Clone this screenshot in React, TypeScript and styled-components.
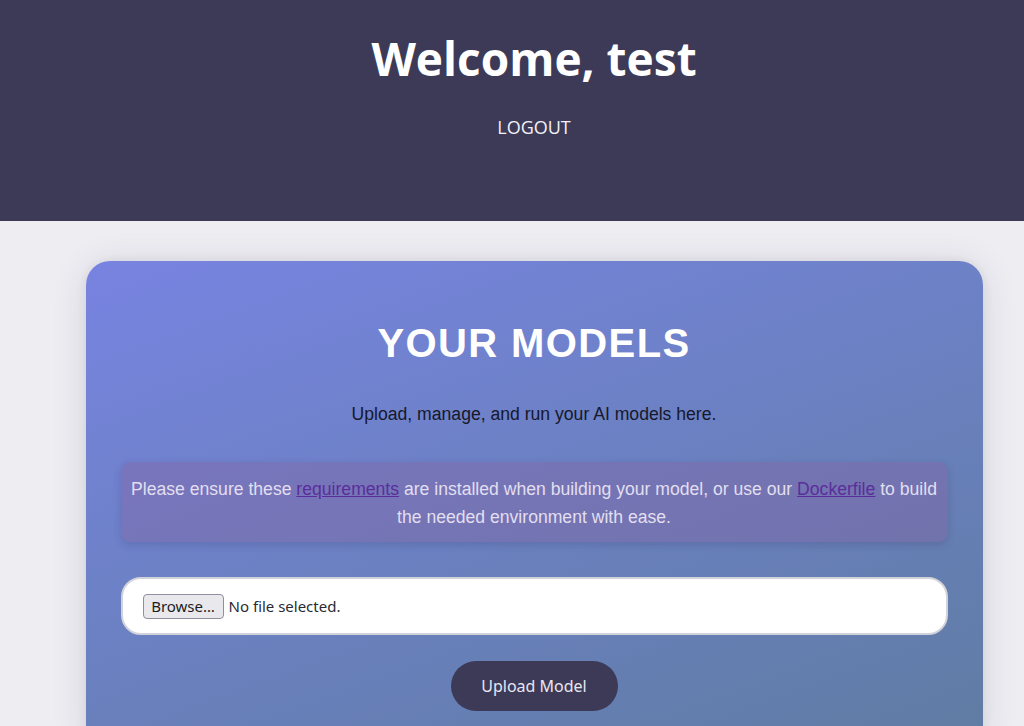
import styled, { createGlobalStyle } from "styled-components";

const GlobalStyle = createGlobalStyle`
  html, body {
    margin: 0;
    padding: 0;
    background: #eeedf2;
    overflow-x: hidden;
  }
  body {
    font-family: "Liberation Sans", Arial, sans-serif;
  }
`;

const Page = styled.div`
  width: 1068px;
  min-height: 726px;
  background: #eeedf2;
`;

const Header = styled.header`
  height: 221px;
  box-sizing: border-box;
  background: #3c3a57;
  display: flex;
  flex-direction: column;
  align-items: center;
  padding-top: 26px;
  font-family: "Open Sans", sans-serif;
  color: #ffffff;
`;

const Welcome = styled.h1`
  margin: 0;
  font-size: 46px;
  font-weight: 700;
  line-height: 64px;
`;

const LogoutLink = styled.a`
  margin-top: 25px;
  font-size: 18px;
  line-height: 24px;
  color: #f2f1f7;
  text-decoration: none;
  cursor: pointer;
`;

const Main = styled.main`
  padding-top: 40px;
  display: flex;
  justify-content: center;
`;

const Card = styled.section`
  width: 897px;
  box-sizing: border-box;
  padding: 58px 35px 40px;
  border-radius: 24px;
  background: linear-gradient(160deg, #7883e1 0%, #6c81c4 45%, #5f7ca2 100%);
  box-shadow: 0 4px 36px rgba(40, 40, 70, 0.12), 0 0 10px rgba(40, 40, 70, 0.08);
  display: flex;
  flex-direction: column;
  align-items: stretch;
`;

const Title = styled.h2`
  margin: 0;
  text-align: center;
  font-size: 40px;
  line-height: 48px;
  font-weight: 700;
  letter-spacing: 1.4px;
  color: #ffffff;
`;

const Subtitle = styled.p`
  margin: 35px 0 0;
  text-align: center;
  font-size: 17.6px;
  line-height: 25px;
  color: #16182c;
`;

const Notice = styled.div`
  margin-top: 35px;
  padding: 13px 8px 11px;
  border-radius: 9px;
  background: rgba(130, 100, 165, 0.42);
  box-shadow: 0 3px 8px rgba(40, 40, 90, 0.18);
  text-align: center;
  font-size: 17.6px;
  line-height: 28px;
  color: #e2dff0;
`;

const NoticeLink = styled.a`
  color: #5b2d9c;
  text-decoration: underline;
`;

const FileBox = styled.label`
  margin-top: 35px;
  height: 58px;
  box-sizing: border-box;
  border: 2px solid #d2d2da;
  border-radius: 20px;
  background: #ffffff;
  display: flex;
  align-items: center;
  gap: 5px;
  padding: 0 20px;
  font-family: "Noto Sans", "Open Sans", sans-serif;
  font-size: 15px;
  color: #2a2a33;
  cursor: pointer;
`;

const HiddenInput = styled.input`
  display: none;
`;

const BrowseButton = styled.span`
  display: inline-flex;
  align-items: center;
  justify-content: center;
  width: 81px;
  height: 25px;
  box-sizing: border-box;
  border: 1px solid #8f8f9d;
  border-radius: 4px;
  background: #e9e9ed;
  color: #1c1c22;
`;

const Actions = styled.div`
  margin-top: 26px;
  display: flex;
  justify-content: center;
`;

const UploadButton = styled.button`
  width: 167px;
  height: 50px;
  border: none;
  border-radius: 25px;
  background: #3c3a57;
  color: #e8e6f2;
  font-family: "Noto Sans", "Open Sans", sans-serif;
  font-size: 16px;
  cursor: pointer;
`;

export default function App() {
  return (
    <Page>
      <GlobalStyle />
      <Header>
        <Welcome>Welcome, test</Welcome>
        <LogoutLink>LOGOUT</LogoutLink>
      </Header>
      <Main>
        <Card>
          <Title>YOUR MODELS</Title>
          <Subtitle>Upload, manage, and run your AI models here.</Subtitle>
          <Notice>
            Please ensure these <NoticeLink href="#">requirements</NoticeLink> are
            installed when building your model, or use our{" "}
            <NoticeLink href="#">Dockerfile</NoticeLink> to build the needed
            environment with ease.
          </Notice>
          <FileBox>
            <HiddenInput type="file" />
            <BrowseButton>Browse…</BrowseButton>
            <span>No file selected.</span>
          </FileBox>
          <Actions>
            <UploadButton>Upload Model</UploadButton>
          </Actions>
        </Card>
      </Main>
    </Page>
  );
}
